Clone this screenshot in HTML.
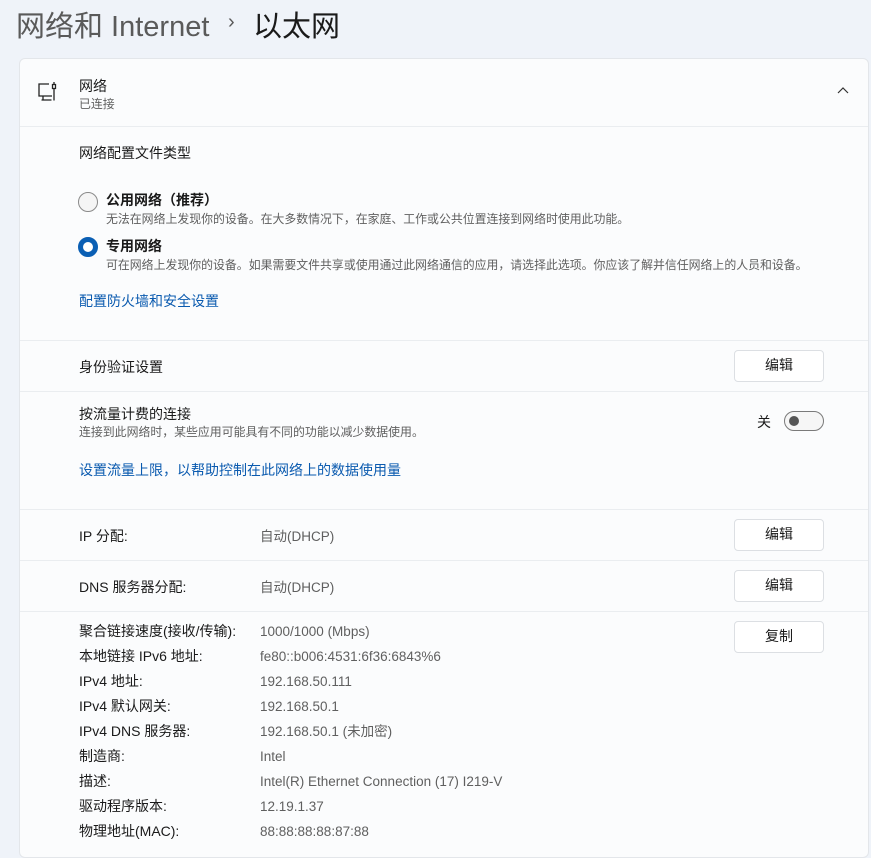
<!DOCTYPE html>
<html><head><meta charset="utf-8"><style>
*{margin:0;padding:0;box-sizing:border-box}
body{width:871px;height:857px;background:#eff3f9;font-family:"Liberation Sans","Noto Sans CJK SC",sans-serif;color:#1a1a1a;position:relative;overflow:hidden;font-size:14px}
.a{position:absolute;white-space:nowrap}
.card{position:absolute;left:19px;top:58px;width:850px;height:800px;background:#fbfcfd;border:1px solid #e3e6ea;border-radius:6px}
.sep{position:absolute;left:20px;width:848px;height:1px;background:#eaedf0}
.btn{position:absolute;left:734px;width:90px;height:32px;background:#fff;border:1px solid #dcdfe3;border-radius:4px;text-align:center;line-height:28px;font-size:14px}
.g{color:#5f5f5f;font-size:13.5px}
.s{font-size:11.9px;color:#5f5f5f}
.lnk{color:#0a5aaf}
</style></head><body>
<div class="a" style="left:16px;top:3px;font-size:29px;color:#5a5a5a">网络和 Internet</div>
<div class="a" style="left:228px;top:11px;font-size:20px;color:#5a5a5a">›</div>
<div class="a" style="left:253px;top:3px;font-size:29px;color:#1a1a1a">以太网</div>
<div class="card"></div>
<svg class="a" style="left:36px;top:80px" width="24" height="24" viewBox="0 0 24 24" fill="none" stroke="#222" stroke-width="1.3"><path d="M13 4H3v12h13M7 16v4h7M5.5 20h10M18 2v2.5M16.5 4.5h3v4h-3z M18 8.5v12"/></svg>
<div class="a" style="left:79px;top:76px">网络</div>
<div class="a s" style="left:79px;top:95px">已连接</div>
<svg class="a" style="left:837px;top:86px" width="12" height="10"><path d="M1 7l5-5 5 5" stroke="#333" fill="none" stroke-width="1.2"/></svg>
<div class="sep" style="top:126px"></div>
<div class="a" style="left:79px;top:143px">网络配置文件类型</div>
<div class="a" style="left:78px;top:192px;width:20px;height:20px;border:1px solid #8a8a8a;border-radius:50%;background:#f5f5f5"></div>
<div class="a" style="left:106px;top:190px;font-size:14px;font-weight:bold">公用网络（推荐）</div>
<div class="a s" style="left:106px;top:210px">无法在网络上发现你的设备。在大多数情况下，在家庭、工作或公共位置连接到网络时使用此功能。</div>
<div class="a" style="left:78px;top:237px;width:20px;height:20px;border:5px solid #0a5fb4;border-radius:50%;background:#fff"></div>
<div class="a" style="left:106px;top:236px;font-size:14px;font-weight:bold">专用网络</div>
<div class="a s" style="left:106px;top:256px">可在网络上发现你的设备。如果需要文件共享或使用通过此网络通信的应用，请选择此选项。你应该了解并信任网络上的人员和设备。</div>
<div class="a lnk" style="left:79px;top:291px">配置防火墙和安全设置</div>
<div class="sep" style="top:340px"></div>
<div class="a" style="left:79px;top:357px">身份验证设置</div>
<div class="btn" style="top:350px">编辑</div>
<div class="sep" style="top:391px"></div>
<div class="a" style="left:79px;top:404px">按流量计费的连接</div>
<div class="a s" style="left:79px;top:423px">连接到此网络时，某些应用可能具有不同的功能以减少数据使用。</div>
<div class="a" style="left:757px;top:412px">关</div>
<div class="a" style="left:784px;top:411px;width:40px;height:20px;border:1px solid #7a7a7a;border-radius:10px;background:#f6f6f6"><div style="position:absolute;left:4px;top:4px;width:10px;height:10px;border-radius:50%;background:#555"></div></div>
<div class="a lnk" style="left:79px;top:460px">设置流量上限，以帮助控制在此网络上的数据使用量</div>
<div class="sep" style="top:509px"></div>
<div class="a" style="left:79px;top:528px;line-height:17px">IP 分配:</div>
<div class="a g" style="left:260px;top:528px;line-height:17px">自动(DHCP)</div>
<div class="btn" style="top:519px">编辑</div>
<div class="sep" style="top:560px"></div>
<div class="a" style="left:79px;top:579px;line-height:17px">DNS 服务器分配:</div>
<div class="a g" style="left:260px;top:579px;line-height:17px">自动(DHCP)</div>
<div class="btn" style="top:570px">编辑</div>
<div class="sep" style="top:611px"></div>
<div class="btn" style="top:621px">复制</div>
<div class="a" style="left:79px;top:619px;line-height:25px">聚合链接速度(接收/传输):<br>本地链接 IPv6 地址:<br>IPv4 地址:<br>IPv4 默认网关:<br>IPv4 DNS 服务器:<br>制造商:<br>描述:<br>驱动程序版本:<br>物理地址(MAC):</div>
<div class="a g" style="left:260px;top:619px;line-height:25px">1000/1000 (Mbps)<br>fe80::b006:4531:6f36:6843%6<br>192.168.50.111<br>192.168.50.1<br>192.168.50.1 (未加密)<br>Intel<br>Intel(R) Ethernet Connection (17) I219-V<br>12.19.1.37<br>88:88:88:88:87:88</div>
</body></html>
